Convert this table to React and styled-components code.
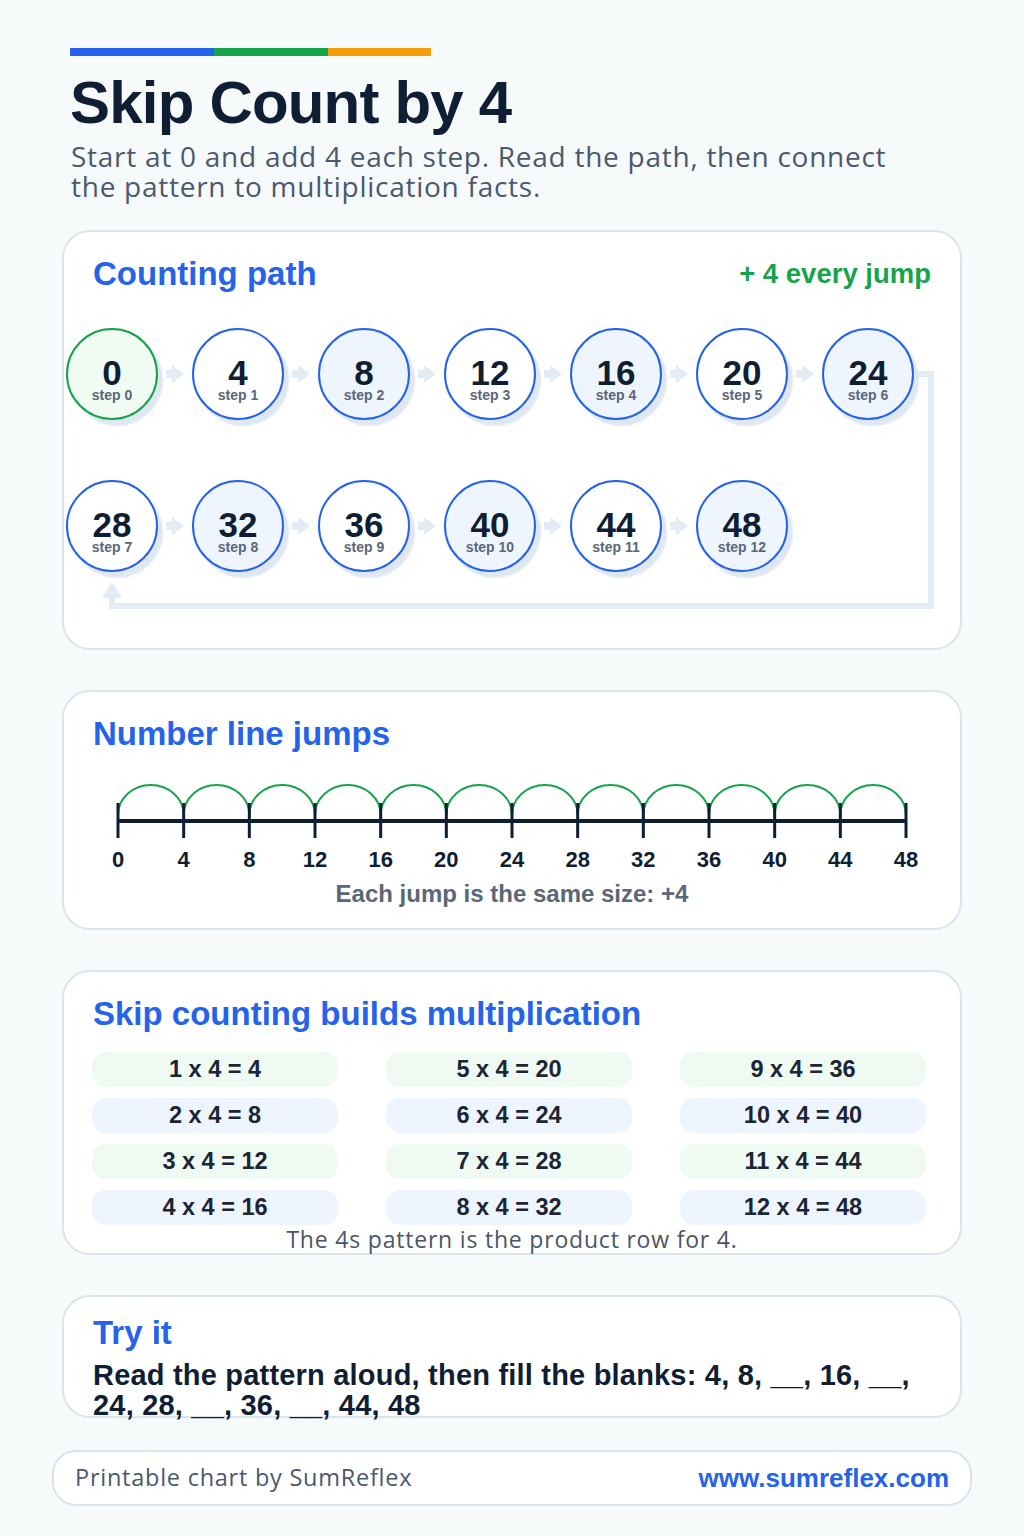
import React from "react";
import styled, { createGlobalStyle } from "styled-components";

const GlobalStyle = createGlobalStyle`
  html, body { margin: 0; padding: 0; background: #f7fafa; }
  body { font-family: "Liberation Sans", Arial, sans-serif; color: #0f1e33; }
  * { box-sizing: border-box; }
`;

const HEAD = `"Liberation Sans", Arial, sans-serif`;
const BODY = `"Open Sans", "Noto Sans", sans-serif`;

const Page = styled.div`
  width: 1024px;
  min-height: 1536px;
  padding: 48px 62px 30px;
`;

const Header = styled.header`
  padding-left: 8px;
`;

const ColorBar = styled.div`
  display: flex;
  height: 8px;
  width: 361px;
`;

const BarPart = styled.span`
  width: ${(p) => p.$w}px;
  background: ${(p) => p.$c};
`;

const Title = styled.h1`
  margin: 15px 0 0;
  font: 700 60px/64px ${HEAD};
  letter-spacing: -0.8px;
  color: #0f1e33;
`;

const Subtitle = styled.p`
  margin: 6px 0 0 1px;
  font: 400 28px/30px ${BODY};
  letter-spacing: 0.74px;
  color: #4a5870;
  max-width: 850px;
`;

const Stack = styled.main`
  display: flex;
  flex-direction: column;
  gap: 40px;
  margin-top: 29px;
`;

const Card = styled.section`
  background: #fff;
  border: 2px solid #dbe4ee;
  border-radius: 28px;
  height: ${(p) => p.$h}px;
  padding: ${(p) => p.$pt ?? 22}px 29px 0;
`;

const CardHead = styled.div`
  display: flex;
  justify-content: space-between;
  align-items: center;
`;

const CardTitle = styled.h2`
  margin: 0 0 ${(p) => p.$mb ?? 0}px;
  font: 700 33px/40px ${HEAD};
  color: #2563eb;
`;

const JumpNote = styled.span`
  font: 700 27.5px/40px ${HEAD};
  color: #16a34a;
`;

/* ---------- counting path ---------- */

const PathArea = styled.div`
  position: relative;
  margin: 34px 0 0 -27px;
  width: 880px;
  height: 282px;
`;

const Connector = styled.svg`
  position: absolute;
  left: 0;
  top: 0;
  z-index: 0;
  overflow: visible;
`;

const Rows = styled.div`
  position: relative;
  z-index: 1;
  display: flex;
  flex-direction: column;
  gap: 60px;
`;

const Row = styled.div`
  display: flex;
  align-items: center;
`;

const Bubble = styled.div`
  flex-shrink: 0;
  width: 92px;
  height: 92px;
  border-radius: 50%;
  border: 2px solid ${(p) => (p.$start ? "#16a34a" : "#2563eb")};
  background: ${(p) => (p.$start ? "#effbf3" : p.$tint ? "#eef5ff" : "#ffffff")};
  box-shadow: 5px 6px 2px #dfe7f1;
  display: flex;
  flex-direction: column;
  align-items: center;
  padding-top: 30px;
`;

const BubbleNum = styled.span`
  font: 700 35px/26px ${HEAD};
  color: #0f1e33;
`;

const BubbleStep = styled.span`
  margin-top: 2px;
  font: 700 14px/14px ${HEAD};
  color: #5b6677;
`;

const StepArrow = styled.svg`
  flex-shrink: 0;
  margin: 0 8px;
  display: block;
`;

/* ---------- number line ---------- */

const LineChart = styled.svg`
  display: block;
  margin-top: 26px;
  overflow: visible;
`;

const Caption = styled.p`
  margin: 11px 0 0;
  text-align: center;
  font: 700 24px/26px ${HEAD};
  color: #5b6677;
`;

/* ---------- facts ---------- */

const FactGrid = styled.div`
  display: grid;
  grid-template-columns: repeat(3, 246px);
  grid-template-rows: repeat(4, 35px);
  grid-auto-flow: column;
  column-gap: 48px;
  row-gap: 11px;
  margin: 18px 0 0 -1px;
`;

const Fact = styled.div`
  display: flex;
  align-items: center;
  justify-content: center;
  border-radius: 14px;
  background: ${(p) => (p.$green ? "#eefaf2" : "#eef5ff")};
  font: 700 23.5px/1 ${HEAD};
  color: #1b2536;
`;

const Note = styled.p`
  margin: 2px 0 0;
  text-align: center;
  font: 400 23px/24px ${BODY};
  letter-spacing: 0.8px;
  color: #4b5565;
`;

/* ---------- try it ---------- */

const Prompt = styled.p`
  margin: 0;
  font: 700 29px/30px ${HEAD};
  letter-spacing: 0.2px;
  color: #0f1e33;
`;

/* ---------- footer ---------- */

const Footer = styled.footer`
  margin: 32px -10px 0;
  height: 56px;
  background: #fff;
  border: 2px solid #dbe4ee;
  border-radius: 24px;
  display: flex;
  align-items: center;
  justify-content: space-between;
  padding: 0 21px;
`;

const FooterNote = styled.span`
  font: 400 23.5px/1 ${BODY};
  letter-spacing: 0.75px;
  color: #4a5870;
`;

const FooterLink = styled.a`
  font: 700 26px/1 ${HEAD};
  color: #2563eb;
  text-decoration: none;
`;

const ARROW_FILL = "#e3ebf5";

function Arrow() {
  return (
    <StepArrow width="18" height="18" viewBox="0 0 18 18">
      <rect x="0" y="5" width="8" height="8" fill={ARROW_FILL} />
      <polygon points="6,0 18,9 6,18" fill={ARROW_FILL} />
    </StepArrow>
  );
}

function StepBubble({ i }) {
  return (
    <Bubble $start={i === 0} $tint={i % 2 === 0}>
      <BubbleNum>{i * 4}</BubbleNum>
      <BubbleStep>step {i}</BubbleStep>
    </Bubble>
  );
}

function PathRow({ from, to }) {
  const items = [];
  for (let i = from; i <= to; i++) {
    if (i > from) items.push(<Arrow key={"a" + i} />);
    items.push(<StepBubble key={i} i={i} />);
  }
  return <Row>{items}</Row>;
}

function NumberLine() {
  const x0 = 25;
  const step = 788 / 12;
  const ticks = Array.from({ length: 13 }, (_, i) => x0 + i * step);
  return (
    <LineChart width="840" height="90" viewBox="0 0 840 90">
      {ticks.slice(0, 12).map((x, i) => (
        <path
          key={"arc" + i}
          d={`M ${x} 35 A ${step / 2} 30 0 0 1 ${x + step} 35`}
          fill="none"
          stroke="#16a34a"
          strokeWidth="2"
        />
      ))}
      <line x1={x0} y1="41" x2={x0 + 788} y2="41" stroke="#0f1e33" strokeWidth="4" />
      {ticks.map((x, i) => (
        <line key={"t" + i} x1={x} y1="23" x2={x} y2="58" stroke="#0f1e33" strokeWidth="3" />
      ))}
      {ticks.map((x, i) => (
        <text
          key={"l" + i}
          x={x}
          y="87"
          textAnchor="middle"
          fontFamily='"Liberation Sans", Arial, sans-serif'
          fontWeight="700"
          fontSize="22"
          fill="#0f1e33"
        >
          {i * 4}
        </text>
      ))}
    </LineChart>
  );
}

export default function App() {
  const facts = Array.from({ length: 12 }, (_, i) => i + 1);
  return (
    <>
      <GlobalStyle />
      <Page>
        <Header>
          <ColorBar>
            <BarPart $w={144} $c="#2563eb" />
            <BarPart $w={114} $c="#16a34a" />
            <BarPart $w={103} $c="#f59e0b" />
          </ColorBar>
          <Title>Skip Count by 4</Title>
          <Subtitle>
            Start at 0 and add 4 each step. Read the path, then connect the pattern to
            multiplication facts.
          </Subtitle>
        </Header>

        <Stack>
          <Card $h={420}>
            <CardHead>
              <CardTitle>Counting path</CardTitle>
              <JumpNote>+ 4 every jump</JumpNote>
            </CardHead>
            <PathArea>
              <Connector width="880" height="290" viewBox="0 0 880 290">
                <polyline
                  points="840,46 865,46 865,278 46,278 46,266"
                  fill="none"
                  stroke="#e3ebf5"
                  strokeWidth="6"
                  strokeLinejoin="miter"
                />
                <polygon points="36,270 56,270 46,254" fill="#e3ebf5" />
              </Connector>
              <Rows>
                <PathRow from={0} to={6} />
                <PathRow from={7} to={12} />
              </Rows>
            </PathArea>
          </Card>

          <Card $h={240}>
            <CardTitle>Number line jumps</CardTitle>
            <NumberLine />
            <Caption>Each jump is the same size: +4</Caption>
          </Card>

          <Card $h={285}>
            <CardTitle>Skip counting builds multiplication</CardTitle>
            <FactGrid>
              {facts.map((n) => (
                <Fact key={n} $green={(n - 1) % 2 === 0}>
                  {n} x 4 = {n * 4}
                </Fact>
              ))}
            </FactGrid>
            <Note>The 4s pattern is the product row for 4.</Note>
          </Card>

          <Card $h={123} $pt={16}>
            <CardTitle $mb={7}>Try it</CardTitle>
            <Prompt>
              Read the pattern aloud, then fill the blanks: 4, 8, __, 16, __, 24, 28, __, 36,
              __, 44, 48
            </Prompt>
          </Card>
        </Stack>

        <Footer>
          <FooterNote>Printable chart by SumReflex</FooterNote>
          <FooterLink href="#">www.sumreflex.com</FooterLink>
        </Footer>
      </Page>
    </>
  );
}
